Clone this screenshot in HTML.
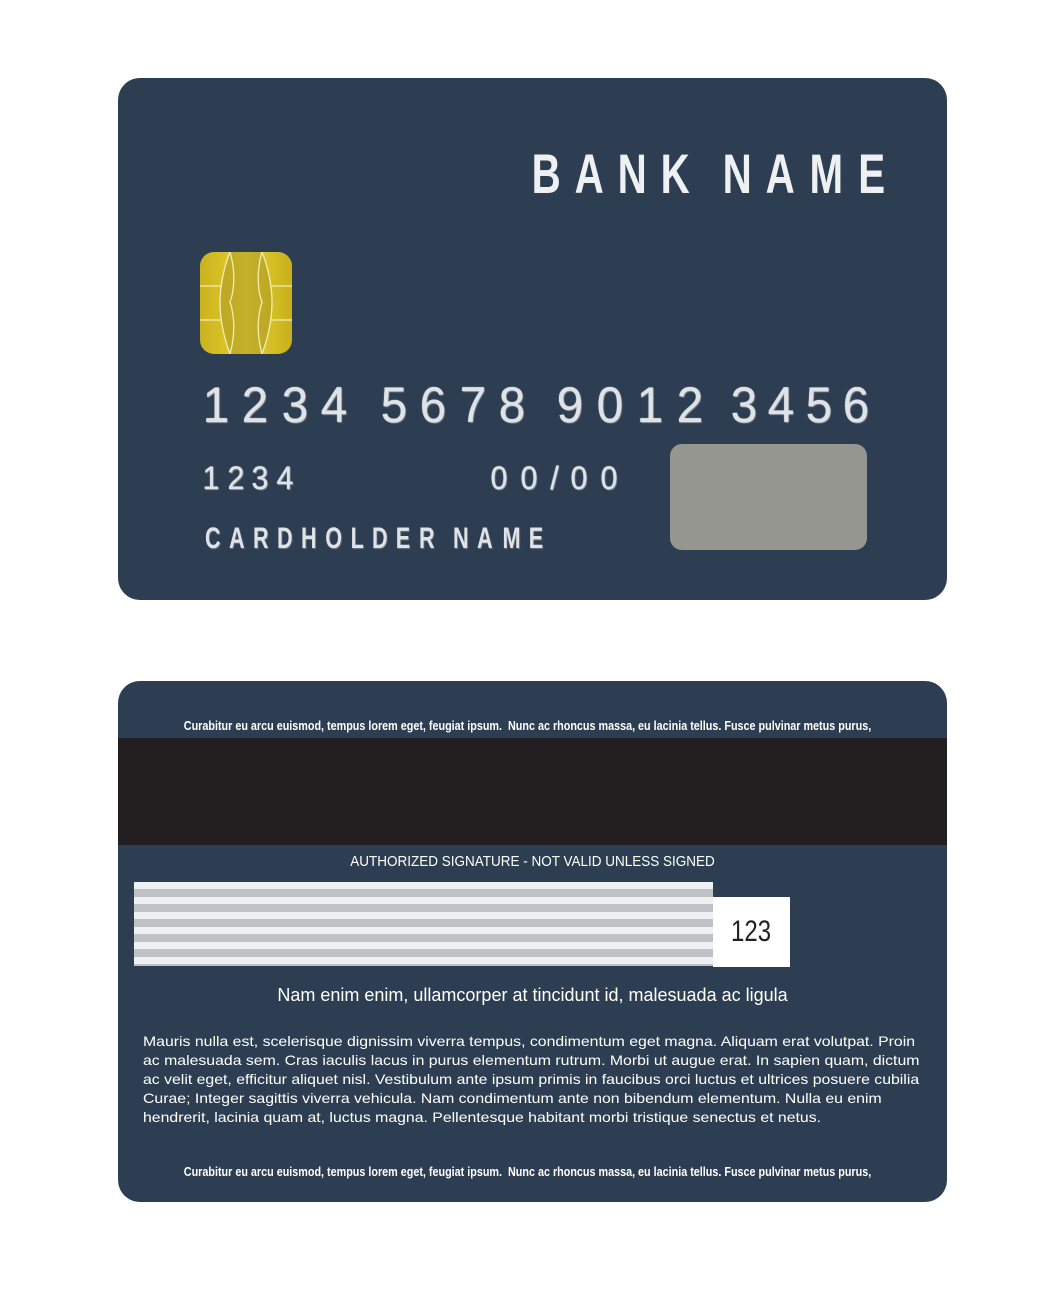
<!DOCTYPE html>
<html><head><meta charset="utf-8"><style>
body{margin:0;width:1040px;height:1300px;background:#fff;position:relative;overflow:hidden;font-family:"Liberation Sans",sans-serif}
.card{position:absolute;left:118px;width:829px;background:#2d3e52;border-radius:22px;overflow:hidden}
.sp{position:absolute;display:flex;justify-content:space-between;align-items:flex-end}
.sp span{display:inline-block}
.bank{top:148px;width:364px;height:52px;color:#eef0f2;font-weight:bold;font-size:56px;line-height:52px}
.bank span{transform:scaleX(.72)}
.num{color:#dfe2e6;font-size:50px;line-height:50px;text-shadow:0 0 1px #fff,1px 1px 1px #7d8590}
.num span{transform:scaleX(.95)}
.ch{color:#dfe2e6;font-weight:bold;font-size:30px;line-height:30px;text-shadow:1px 1px 1px #6d7580}
.ch span{transform:scaleX(.72)}
.small{position:absolute;left:-100px;width:1019px;text-align:center;color:#fff;font-weight:bold;font-size:12.7px;transform:scaleX(.85);white-space:nowrap}
</style></head><body>
<div class="card" style="top:78px;height:522px">
 <div class="sp bank" style="left:408px;top:70px"><span>B</span><span>A</span><span>N</span><span>K</span><span>&nbsp;</span><span>N</span><span>A</span><span>M</span><span>E</span></div>
 <svg style="position:absolute;left:82px;top:174px" width="92" height="102" viewBox="0 0 92 102">
  <defs><linearGradient id="g" x1="0" x2="1"><stop offset="0" stop-color="#c9b21e"/><stop offset=".5" stop-color="#e6d030"/><stop offset="1" stop-color="#c7b01c"/></linearGradient></defs>
  <rect x="0" y="0" width="92" height="102" rx="14" fill="url(#g)"/>
  <path d="M30 0 C22 20 20 40 20 50 C20 62 22 80 30 102 L62 102 C70 80 72 62 72 50 C72 40 70 20 62 0Z" fill="#a99622" opacity=".55"/>
  <path d="M30 0 C22 20 20 40 20 50 C20 62 22 80 30 102 M62 0 C70 20 72 40 72 50 C72 62 70 80 62 102 M30 0 C36 20 34 40 30 50 C34 62 36 80 30 102 M62 0 C56 20 58 40 62 50 C58 62 56 80 62 102" stroke="#f2ecb0" stroke-width="1.3" fill="none"/>
  <path d="M0 34 H22 M0 68 H22 M70 34 H92 M70 68 H92" stroke="#f2ecb0" stroke-width="1.2" fill="none"/>
 </svg>
 <div class="sp num" style="left:84px;top:302px;width:146px"><span>1</span><span>2</span><span>3</span><span>4</span></div>
 <div class="sp num" style="left:262px;top:302px;width:146px"><span>5</span><span>6</span><span>7</span><span>8</span></div>
 <div class="sp num" style="left:438px;top:302px;width:148px"><span>9</span><span>0</span><span>1</span><span>2</span></div>
 <div class="sp num" style="left:612px;top:302px;width:140px"><span>3</span><span>4</span><span>5</span><span>6</span></div>
 <div class="sp num" style="left:84px;top:384px;width:92px;font-size:32px;line-height:32px"><span>1</span><span>2</span><span>3</span><span>4</span></div>
 <div class="sp num" style="left:372px;top:384px;width:128px;font-size:32px;line-height:32px"><span>0</span><span>0</span><span>/</span><span>0</span><span>0</span></div>
 <div class="sp ch" style="left:84px;top:446px;width:344px"><span>C</span><span>A</span><span>R</span><span>D</span><span>H</span><span>O</span><span>L</span><span>D</span><span>E</span><span>R</span><span>&nbsp;</span><span>N</span><span>A</span><span>M</span><span>E</span></div>
 <div style="position:absolute;left:552px;top:366px;width:197px;height:106px;background:#969690;border-radius:12px"></div>
</div>
<div class="card" style="top:681px;height:521px">
 <div class="small" style="top:38px">Curabitur eu arcu euismod, tempus lorem eget, feugiat ipsum.&nbsp; Nunc ac rhoncus massa, eu lacinia tellus. Fusce pulvinar metus purus,</div>
 <div style="position:absolute;left:0;top:57px;width:829px;height:107px;background:#231f20"></div>
 <div style="position:absolute;left:0;top:172px;width:829px;text-align:center;color:#fff;font-size:15px;transform:scaleX(.9)">AUTHORIZED SIGNATURE - NOT VALID UNLESS SIGNED</div>
 <div style="position:absolute;left:16px;top:201px;width:579px;height:84px;background:repeating-linear-gradient(#eef0f2 0 7px,#bfc2c6 7px 15px)"></div>
 <div style="position:absolute;left:595px;top:216px;width:77px;height:70px;background:#fff;color:#222;font-size:30px;line-height:70px;text-align:center"><span style="display:inline-block;transform:scaleX(.8)">123</span></div>
 <div style="position:absolute;left:0;top:304px;width:829px;text-align:center;color:#fff;font-size:18px">Nam enim enim, ullamcorper at tincidunt id, malesuada ac ligula</div>
 <div style="position:absolute;left:25px;top:351px;color:#fff;font-size:14px;line-height:19px;white-space:nowrap;transform:scaleX(1.13);transform-origin:left top">Mauris nulla est, scelerisque dignissim viverra tempus, condimentum eget magna. Aliquam erat volutpat. Proin<br>ac malesuada sem. Cras iaculis lacus in purus elementum rutrum. Morbi ut augue erat. In sapien quam, dictum<br>ac velit eget, efficitur aliquet nisl. Vestibulum ante ipsum primis in faucibus orci luctus et ultrices posuere cubilia<br>Curae; Integer sagittis viverra vehicula. Nam condimentum ante non bibendum elementum. Nulla eu enim<br>hendrerit, lacinia quam at, luctus magna. Pellentesque habitant morbi tristique senectus et netus.</div>
 <div class="small" style="top:484px">Curabitur eu arcu euismod, tempus lorem eget, feugiat ipsum.&nbsp; Nunc ac rhoncus massa, eu lacinia tellus. Fusce pulvinar metus purus,</div>
</div>
</body></html>
